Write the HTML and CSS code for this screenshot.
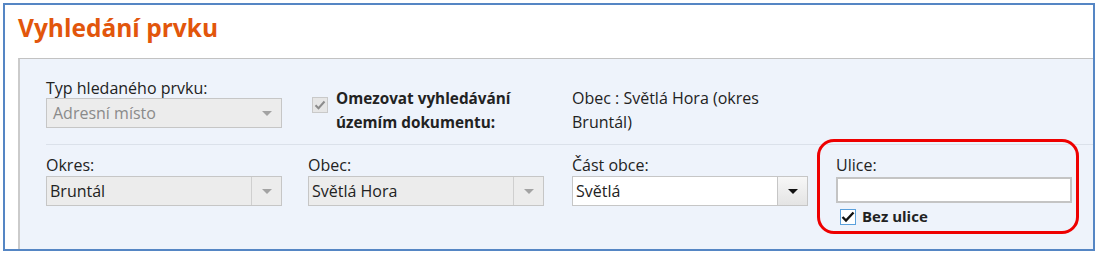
FILE: index.html
```html
<!DOCTYPE html>
<html lang="cs">
<head>
    <meta charset="UTF-8">
    <title>Vyhledání prvku</title>
    <link rel="stylesheet" href="styles.css">
</head>
<body>
    <div class="frame">
        <h1 class="title">Vyhledání prvku</h1>
        <div class="panel">
            <div class="row row-top">
                <div class="field">
                    <div class="label">Typ hledaného prvku:</div>
                    <div class="select disabled muted">
                        <span class="value">Adresní místo</span>
                        <span class="arrow"></span>
                    </div>
                </div>
                <div class="field check-field">
                    <span class="checkbox disabled">
                        <svg width="12" height="10" viewBox="0 0 12 10"><path d="M1.5 5.2 L4.5 8.2 L10.5 1.5" fill="none" stroke="#8c8c8c" stroke-width="2"/></svg>
                    </span>
                    <span class="check-label">Omezovat vyhledávání<br>územím dokumentu:</span>
                </div>
                <div class="field info">Obec : Světlá Hora (okres<br>Bruntál)</div>
            </div>
            <div class="divider"></div>
            <div class="row row-bottom">
                <div class="field">
                    <div class="label">Okres:</div>
                    <div class="select disabled">
                        <span class="value">Bruntál</span>
                        <span class="arrow split"></span>
                    </div>
                </div>
                <div class="field">
                    <div class="label">Obec:</div>
                    <div class="select disabled">
                        <span class="value">Světlá Hora</span>
                        <span class="arrow split"></span>
                    </div>
                </div>
                <div class="field">
                    <div class="label">Část obce:</div>
                    <div class="select">
                        <span class="value">Světlá</span>
                        <span class="arrow button"></span>
                    </div>
                </div>
                <div class="field highlight">
                    <div class="label">Ulice:</div>
                    <div class="input"></div>
                    <div class="check-row">
                        <span class="checkbox active">
                            <svg width="14" height="12" viewBox="0 0 14 12"><path d="M1.5 6 L5 9.5 L12.5 1.5" fill="none" stroke="#111" stroke-width="2.4"/></svg>
                        </span>
                        <span class="check-text">Bez ulice</span>
                    </div>
                </div>
            </div>
        </div>
    </div>
</body>
</html>
```

FILE: styles.css
```css
body {
    margin: 0;
    font-family: "Open Sans", "Noto Sans", sans-serif;
    background-color: #fff;
    color: #222;
}
.frame {
    margin: 3px 2px 0 3px;
    height: 244px;
    border: 2px solid #5586c4;
    display: flex;
    flex-direction: column;
    background-color: #fff;
}
.title {
    margin: 0;
    height: 53px;
    box-sizing: border-box;
    padding: 7px 0 0 13px;
    font-size: 24.5px;
    line-height: 32px;
    font-weight: 700;
    color: #e2560c;
}
.panel {
    flex: 1;
    margin-left: 13px;
    border-top: 1px solid #c2c2c2;
    border-left: 2px solid #cbcbcb;
    background-color: #eef3fb;
    padding: 19px 0 0 26px;
}
.row {
    display: grid;
    grid-template-columns: 262px 264px 264px 236px;
}
.label {
    font-size: 16px;
    line-height: 20px;
}
.row-bottom .label {
    line-height: 21px;
}
.select {
    width: 236px;
    height: 30px;
    box-sizing: border-box;
    border: 1px solid #c6c6c6;
    background-color: #fff;
    display: flex;
    align-items: center;
    font-size: 16px;
}
.select.disabled {
    background-color: #ececec;
}
.select.muted {
    color: #8a8a8a;
}
.value {
    flex: 1;
    padding-left: 3px;
}
.select.muted .value {
    padding-left: 6px;
}
.arrow {
    width: 29px;
    height: 100%;
    display: flex;
    align-items: center;
    justify-content: center;
}
.arrow::after {
    content: "";
    border-left: 5px solid transparent;
    border-right: 5px solid transparent;
    border-top: 5px solid #a3a3a3;
}
.arrow.split {
    border-left: 1px solid #cfcfcf;
}
.arrow.button {
    border-left: 1px solid #c6c6c6;
    background: linear-gradient(#f7f7f7, #e4e4e4);
}
.arrow.button::after {
    border-top-color: #111;
}
.check-field {
    display: flex;
    align-items: flex-start;
    padding-top: 8px;
}
.checkbox {
    width: 16px;
    height: 16px;
    box-sizing: border-box;
    display: flex;
    align-items: center;
    justify-content: center;
    flex-shrink: 0;
}
.checkbox.disabled {
    margin: 11px 8px 0 4px;
    border: 1px solid #c9c9c9;
    background-color: #e6e6e6;
}
.check-label {
    font-size: 15.3px;
    line-height: 24px;
    font-weight: 700;
}
.info {
    padding-top: 8px;
    font-size: 16px;
    line-height: 24px;
}
.divider {
    height: 1px;
    margin: 10px 0 10px;
    background-color: #dbe1ea;
}
.input {
    height: 26px;
    box-sizing: border-box;
    border: 2px solid #c4c4c4;
    background-color: #fff;
    margin-top: 1px;
}
.check-row {
    display: flex;
    align-items: center;
    margin-top: 5px;
    padding-left: 4px;
}
.checkbox.active {
    border: 1px solid #5aa0dc;
    background-color: #fff;
    margin-right: 6px;
}
.check-text {
    font-size: 15px;
    line-height: 17px;
    font-weight: 700;
}
.highlight {
    position: relative;
}
.highlight::after {
    content: "";
    position: absolute;
    left: -19px;
    right: -7px;
    top: -16px;
    bottom: -9px;
    border: 3px solid #ee0000;
    border-radius: 17px;
}
```
